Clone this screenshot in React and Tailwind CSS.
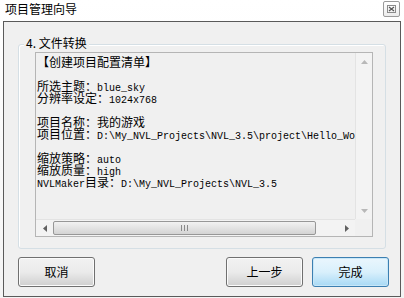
const cjk = "font-['Noto_Sans_CJK_SC',sans-serif]";

function Mono({ children }) {
  return (
    <span className="font-['Liberation_Mono',monospace] text-[10px] leading-[12px] align-baseline">{children}</span>
  );
}

function Line({ children }) {
  return <div className="h-[12px] leading-[12px]">{children}</div>;
}

function Arrow({ dir, light }) {
  const color = light ? '#b8b8b8' : '#606060';
  const pts = {
    up: '0,4 3.5,0 7,4',
    down: '0,0 3.5,4 7,0',
    left: '4,0 0,3.5 4,7',
    right: '0,0 4,3.5 0,7',
  }[dir];
  const vertical = dir === 'up' || dir === 'down';
  return (
    <svg width={vertical ? 7 : 4} height={vertical ? 4 : 7} viewBox={vertical ? '0 0 7 4' : '0 0 4 7'}>
      <polygon points={pts} fill={color} />
    </svg>
  );
}

function Button({ label, primary }) {
  return (
    <button
      className={`w-[77px] h-[30px] rounded-[3px] border text-[12px] text-black ${cjk} ${
        primary
          ? 'border-[#3c7fb1] bg-gradient-to-b from-[#eaf6fd] via-[#d9f0fc] to-[#a7d9f5] shadow-[inset_0_0_0_1px_#c8e7f8]'
          : 'border-[#707070] bg-gradient-to-b from-[#f2f2f2] via-[#ebebeb] to-[#cfcfcf] shadow-[inset_0_0_0_1px_#fbfbfb]'
      }`}
    >
      {label}
    </button>
  );
}

function App() {
  return (
    <div className={`w-[404px] h-[298px] bg-gradient-to-b from-[#ffffff] to-[#f4f4f4] flex flex-col ${cjk}`}>
      {/* Title bar */}
      <div className="h-[21px] flex items-start justify-between pl-[5px] pr-[4px]">
        <span className="text-[12px] leading-[18px] text-black">项目管理向导</span>
        <div className="mt-[1px] w-[17px] h-[16px] border border-[#9a9a9a] rounded-[2px] bg-gradient-to-b from-white to-[#ececec] flex items-center justify-center">
          <svg width="9" height="8" viewBox="0 0 9 8">
            <rect x="0.5" y="0.5" width="8" height="7" fill="none" stroke="#8a8a8a" />
            <path d="M2 2 L7 6 M7 2 L2 6" stroke="#555" strokeWidth="1.2" />
          </svg>
        </div>
      </div>

      {/* Window body */}
      <div className="ml-[3px] w-[398px] h-[276px] border border-[#5a5a5a] bg-[#f0f0f0] flex flex-col">
        {/* Group box */}
        <div className="relative ml-[14px] mt-[22px] w-[368px] h-[205px] border border-[#d5dfe5] rounded-[3px] shadow-[inset_1px_1px_0_#ffffff]">
          <span className="absolute left-[5px] -top-[10px] px-[2px] bg-[#f0f0f0] text-[12px] leading-[16px] text-black">
            4. 文件转换
          </span>

          {/* Edit box */}
          <div className="ml-[16px] mt-[7px] w-[338px] h-[185px] border border-[#b5b5b5] bg-[#f0f0f0] grid grid-cols-[1fr_17px] grid-rows-[1fr_17px] overflow-hidden">
            <div className="pl-[1px] pt-[3px] text-[12px] text-black whitespace-nowrap overflow-hidden">
              <Line>【创建项目配置清单】</Line>
              <Line />
              <Line>所选主题：<Mono>blue_sky</Mono></Line>
              <Line>分辨率设定：<Mono>1024x768</Mono></Line>
              <Line />
              <Line>项目名称：我的游戏</Line>
              <Line>项目位置：<Mono>D:\My_NVL_Projects\NVL_3.5\project\Hello_World</Mono></Line>
              <Line />
              <Line>缩放策略：<Mono>auto</Mono></Line>
              <Line>缩放质量：<Mono>high</Mono></Line>
              <Line><Mono>NVLMaker</Mono>目录：<Mono>D:\My_NVL_Projects\NVL_3.5</Mono></Line>
            </div>

            {/* Vertical scrollbar */}
            <div className="border-l border-[#e3e3e3] bg-[#f3f3f3] flex flex-col justify-between">
              <div className="h-[17px] flex items-center justify-center"><Arrow dir="up" light /></div>
              <div className="h-[17px] flex items-center justify-center"><Arrow dir="down" light /></div>
            </div>

            {/* Horizontal scrollbar */}
            <div className="border-t border-[#e3e3e3] bg-[#f3f3f3] flex items-center">
              <div className="w-[17px] h-full flex items-center justify-center"><Arrow dir="left" /></div>
              <div className="w-[263px] h-[14px] rounded-[2px] border border-[#979797] bg-gradient-to-b from-[#f2f2f2] to-[#d4d4d4] flex items-center justify-center">
                <svg width="7" height="6" viewBox="0 0 7 6">
                  <path d="M0.5 0 V6 M3.5 0 V6 M6.5 0 V6" stroke="#8a8a8a" strokeWidth="1" />
                </svg>
              </div>
              <div className="flex-1" />
              <div className="w-[17px] h-full flex items-center justify-center"><Arrow dir="right" /></div>
            </div>
            <div className="bg-[#f0f0f0]" />
          </div>
        </div>

        {/* Buttons */}
        <div className="mt-[8px] ml-[14px] mr-[11px] flex items-center">
          <Button label="取消" />
          <div className="flex-1" />
          <Button label="上一步" />
          <div className="w-[9px]" />
          <Button label="完成" primary />
        </div>
      </div>
    </div>
  );
}

export default App;
